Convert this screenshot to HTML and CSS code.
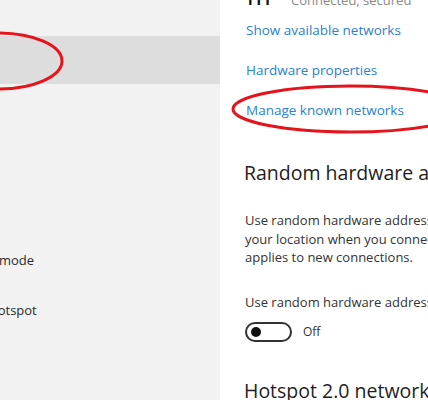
FILE: index.html
```html
<!DOCTYPE html>
<html>
<head>
<meta charset="utf-8">
<link rel="stylesheet" href="styles.css">
</head>
<body>
<div class="page">
  <nav class="nav">
    <ul class="nav-list">
      <li class="nav-item selected">Wi-Fi</li>
      <li class="nav-item">Ethernet</li>
      <li class="nav-item">Dial-up</li>
      <li class="nav-item">VPN</li>
      <li class="nav-item">Airplane mode</li>
      <li class="nav-item">Mobile hotspot</li>
    </ul>
  </nav>
  <main class="content">
    <div class="network">
      <span class="net-name">lll</span>
      <span class="net-status">Connected, secured</span>
    </div>
    <a class="link first">Show available networks</a>
    <a class="link">Hardware properties</a>
    <a class="link">Manage known networks</a>
    <h2 class="heading">Random hardware addresses</h2>
    <p class="para"><span class="line">Use random hardware addresses to make it harder for people to track</span><span class="line">your location when you connect to different Wi-Fi networks. This setting</span><span class="line">applies to new connections.</span></p>
    <p class="label">Use random hardware addresses</p>
    <div class="toggle-row">
      <span class="toggle"><span class="knob"></span></span>
      <span class="toggle-text">Off</span>
    </div>
    <h2 class="heading hotspot">Hotspot 2.0 networks</h2>
  </main>
  <svg class="marks" width="428" height="400" viewBox="0 0 428 400">
    <ellipse cx="-2" cy="61" rx="64" ry="28" fill="none" stroke="#e5141c" stroke-width="3"/>
    <ellipse cx="350" cy="109" rx="117" ry="23" fill="none" stroke="#e5141c" stroke-width="3"/>
  </svg>
</div>
</body>
</html>
```
FILE: styles.css
```css
html, body {
  margin: 0;
  padding: 0;
}
body {
  width: 428px;
  height: 400px;
  overflow: hidden;
  background: #ffffff;
  font-family: "Open Sans", "Noto Sans", sans-serif;
}
.page {
  position: relative;
  display: flex;
  width: 428px;
  height: 400px;
  overflow: hidden;
}
.nav {
  width: 220px;
  flex: 0 0 220px;
  background: #f2f2f2;
  overflow: hidden;
}
.nav-list {
  list-style: none;
  margin: 36px 0 0 0;
  padding: 0;
}
.nav-item {
  height: 48px;
  margin-bottom: 2px;
  display: flex;
  align-items: center;
  font-size: 13px;
  color: #2b2b2b;
  text-indent: -55px;
  white-space: nowrap;
}
.nav-item.selected {
  background: #dddddd;
}
.content {
  flex: 1;
  min-width: 0;
  padding-left: 25px;
  background: #ffffff;
  overflow: hidden;
  white-space: nowrap;
}
.network {
  display: flex;
  align-items: baseline;
  margin-top: -11px;
  height: 16px;
}
.net-name {
  font-weight: 700;
  font-size: 15px;
  color: #111;
  letter-spacing: 4px;
  width: 43px;
  padding-left: 3px;
}
.net-status {
  font-size: 13px;
  color: #8a8a8a;
}
.link {
  display: block;
  font-size: 13.5px;
  color: #2a7fd6;
  line-height: 18px;
  margin-top: 22px;
  padding-left: 1px;
}
.link.first {
  margin-top: 16px;
}
.heading {
  font-weight: 400;
  font-size: 19.5px;
  color: #1e1e1e;
  margin: 42px 0 0 -1px;
  line-height: 24px;
}
.para {
  font-size: 13px;
  line-height: 18.5px;
  color: #333;
  margin: 26px 0 0 0;
}
.line {
  display: block;
}
.label {
  font-size: 13px;
  color: #333;
  margin: 26px 0 0 0;
  line-height: 18px;
}
.toggle-row {
  display: flex;
  align-items: center;
  margin-top: 11px;
}
.toggle {
  box-sizing: border-box;
  width: 47px;
  height: 20px;
  border: 2px solid #333;
  border-radius: 10px;
  display: flex;
  align-items: center;
  padding-left: 4px;
}
.knob {
  width: 10px;
  height: 10px;
  border-radius: 50%;
  background: #111;
}
.toggle-text {
  font-size: 12px;
  color: #333;
  margin-left: 11px;
}
.heading.hotspot {
  margin-top: 37px;
}
.marks {
  position: absolute;
  left: 0;
  top: 0;
  pointer-events: none;
}
```
